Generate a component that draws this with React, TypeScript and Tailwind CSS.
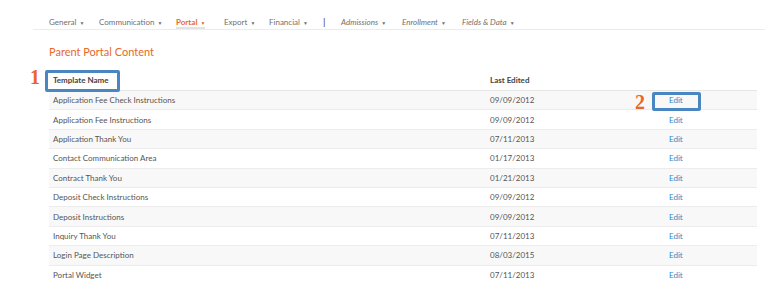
import React from "react";

const navItems = [
  { label: "General", w: "w-[50px]" },
  { label: "Communication", w: "w-[77px]" },
  { label: "Portal", w: "w-[48px]", active: true },
  { label: "Export", w: "w-[45px]" },
  { label: "Financial", w: "w-[54px]" },
];

const navItalic = [
  { label: "Admissions", w: "w-[61px]" },
  { label: "Enrollment", w: "w-[60px]" },
  { label: "Fields & Data", w: "w-[70px]" },
];

const rows = [
  ["Application Fee Check Instructions", "09/09/2012"],
  ["Application Fee Instructions", "09/09/2012"],
  ["Application Thank You", "07/11/2013"],
  ["Contact Communication Area", "01/17/2013"],
  ["Contract Thank You", "01/21/2013"],
  ["Deposit Check Instructions", "09/09/2012"],
  ["Deposit Instructions", "09/09/2012"],
  ["Inquiry Thank You", "07/11/2013"],
  ["Login Page Description", "08/03/2015"],
  ["Portal Widget", "07/11/2013"],
];

const Caret = () => <span className="ml-[3px] text-[5px] align-middle">▼</span>;

const App = () => {
  return (
    <div className="relative h-[293px] w-[770px] overflow-hidden bg-white font-['Lato',sans-serif] text-[#555]">
      {/* top nav */}
      <div className="ml-[33px] mr-[5px] flex h-[30px] items-end border-b border-[#ececec] pl-[16px]">
        {navItems.map((n) => (
          <div key={n.label} className={`${n.w} flex h-[12px] items-start`}>
            <span
              className={`h-[12px] text-[8px] leading-[10px] ${
                n.active
                  ? "border-b-2 border-[#e2e2e2] font-bold text-[#e8672a]"
                  : "text-[#707070]"
              }`}
            >
              {n.label}
              <Caret />
            </span>
          </div>
        ))}
        <div className="flex h-[13px] w-[18px] items-start text-[10px] leading-[11px] text-[#444]">|</div>
        {navItalic.map((n) => (
          <div key={n.label} className={`${n.w} flex h-[12px] items-start`}>
            <span className="text-[8px] italic leading-[10px] text-[#707070]">
              {n.label}
              <Caret />
            </span>
          </div>
        ))}
      </div>

      <div className="pl-[49px] pr-[13px]">
        <h1 className="mt-[14px] h-[16px] text-[11px] leading-[16px] text-[#e8672a]">
          Parent Portal Content
        </h1>

        <div className="mt-[10px]">
          <div className="grid h-[21px] grid-cols-[437px_179px_1fr] items-center border-b border-[#e6e6e6] pl-[4px] text-[8px] font-bold text-[#444]">
            <span>Template Name</span>
            <span>Last Edited</span>
            <span />
          </div>
          {rows.map(([name, date], i) => (
            <div
              key={name}
              className={`grid h-[19.4px] grid-cols-[437px_179px_1fr] items-center pl-[4px] text-[8px] ${
                i % 2 === 0 ? "bg-[#f8f8f8]" : "bg-white"
              } ${i < rows.length - 1 ? "border-b border-[#ececec]" : ""}`}
            >
              <span>{name}</span>
              <span>{date}</span>
              <span className="text-[#2f8ac6]">Edit</span>
            </div>
          ))}
        </div>
      </div>

      {/* annotations */}
      <span className="absolute left-[30px] top-[66px] font-['Liberation_Serif',serif] text-[20px] font-bold leading-[22px] text-[#e8672a]">
        1
      </span>
      <div className="absolute left-[45px] top-[70px] h-[22px] w-[75px] rounded-[2px] border-[3px] border-[#4a86c1]" />
      <span className="absolute left-[635px] top-[91px] font-['Liberation_Serif',serif] text-[20px] font-bold leading-[22px] text-[#e8672a]">
        2
      </span>
      <div className="absolute left-[652px] top-[92px] h-[19px] w-[49px] rounded-[2px] border-[3px] border-[#4a86c1]" />
    </div>
  );
};

export default App;
